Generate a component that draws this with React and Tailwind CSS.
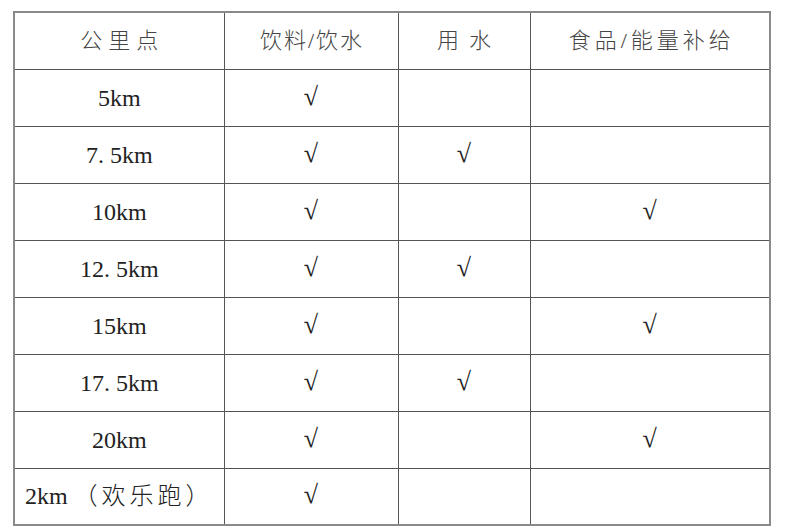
const rows = [
  ["5km", true, false, false],
  ["7. 5km", true, true, false],
  ["10km", true, false, true],
  ["12. 5km", true, true, false],
  ["15km", true, false, true],
  ["17. 5km", true, true, false],
  ["20km", true, false, true],
  ["2km", true, false, false, "（欢乐跑）"],
];

const font = { fontFamily: "'Liberation Serif', 'Noto Sans CJK SC', serif" };

function Check({ on }) {
  return on ? <span className="text-[26px] leading-none text-[#222]">√</span> : null;
}

export default function App() {
  return (
    <div className="min-h-[529px] w-[800px] bg-white pl-[13px] pt-[11px]" style={font}>
      <table className="w-[756px] table-fixed border-collapse border-2 border-[#8a8a8a]">
        <colgroup>
          <col className="w-[210px]" />
          <col className="w-[174px]" />
          <col className="w-[132px]" />
          <col className="w-[240px]" />
        </colgroup>
        <thead>
          <tr className="h-[57px] text-[22px] text-[#444]">
            <th className="border border-[#555] pl-[6px] font-light tracking-[6px]">公里点</th>
            <th className="border border-[#555] pl-[2px] font-light tracking-[2px]">饮料/饮水</th>
            <th className="border border-[#555] pl-[10px] font-light tracking-[10px]">用水</th>
            <th className="border border-[#555] pl-[4px] font-light tracking-[4px]">食品/能量补给</th>
          </tr>
        </thead>
        <tbody>
          {rows.map((r) => (
            <tr key={r[0]} className="h-[57px] text-center">
              <td className="whitespace-pre border border-[#555] text-[24px] font-light text-[#222]">
                {r[0]}
                {r[4] && <span className="pl-[6px] tracking-[4px]">{r[4]}</span>}
              </td>
              <td className="border border-[#555]"><Check on={r[1]} /></td>
              <td className="border border-[#555]"><Check on={r[2]} /></td>
              <td className="border border-[#555]"><Check on={r[3]} /></td>
            </tr>
          ))}
        </tbody>
      </table>
    </div>
  );
}
